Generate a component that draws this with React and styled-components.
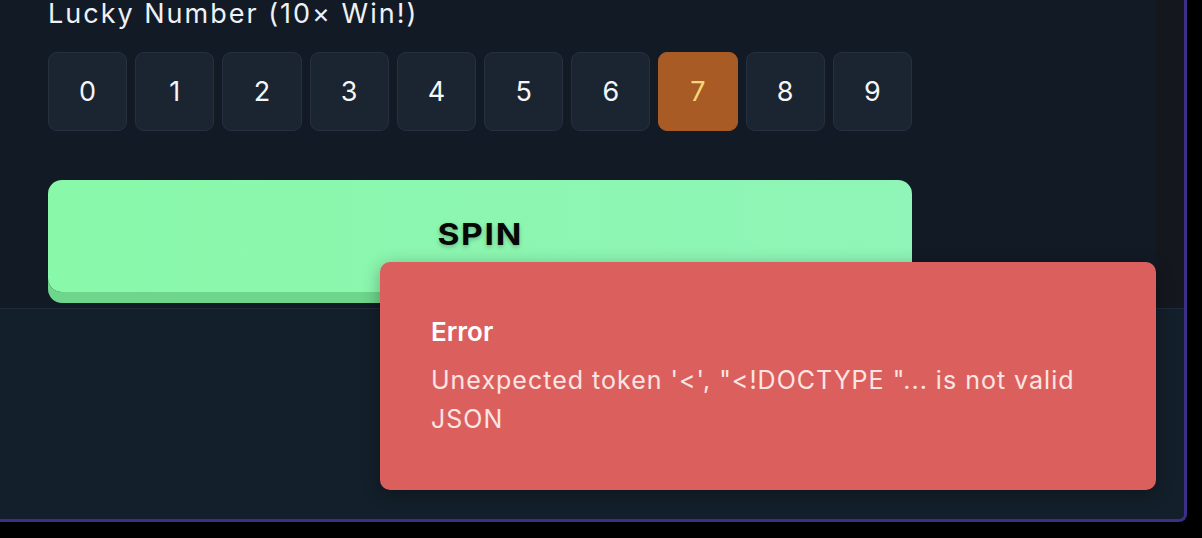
import styled, { createGlobalStyle } from 'styled-components'

const Global = createGlobalStyle`
  html, body {
    margin: 0;
    padding: 0;
    background: #000;
    font-family: Inter, "Noto Sans", sans-serif;
  }
  * { box-sizing: border-box; }
`

const numbers = [0, 1, 2, 3, 4, 5, 6, 7, 8, 9]

function App() {
  const lucky = 7
  return (
    <>
      <Global />
      <Frame>
        <Upper>
          <Content>
            <Label>Lucky Number (10× Win!)</Label>
            <Grid>
              {numbers.map(n => (
                <NumBox key={n} selected={n === lucky}>{n}</NumBox>
              ))}
            </Grid>
            <SpinButton>
              <SpinText>SPIN</SpinText>
            </SpinButton>
          </Content>
          <Track />
        </Upper>
        <Footer />
        <Toast>
          <ToastTitle>Error</ToastTitle>
          <ToastMessage>Unexpected token '&lt;', "&lt;!DOCTYPE "... is not valid JSON</ToastMessage>
        </Toast>
      </Frame>
    </>
  )
}

export default App

const Frame = styled.div`
position: relative;
width: 1187px;
height: 522px;
border-right: 3px solid #3b2f8a;
border-bottom: 3px solid #3b2f8a;
border-bottom-right-radius: 8px;
overflow: hidden;
display: flex;
flex-direction: column;
background: #131f2a;
`

const Upper = styled.div`
height: 309px;
flex-shrink: 0;
display: flex;
background: #121a26;
border-bottom: 1px solid #1d2a39;
`

const Content = styled.div`
flex: 1;
padding-left: 48px;
`

const Track = styled.div`
width: 28px;
background: #15171f;
`

const Label = styled.div`
margin-top: 1px;
font-size: 27px;
line-height: 26px;
letter-spacing: 2px;
color: #eef1f5;
`

const Grid = styled.div`
margin-top: 25px;
width: 864px;
display: grid;
grid-template-columns: repeat(10, 1fr);
gap: 8px;
`

const NumBox = styled.div`
height: 79px;
display: flex;
align-items: center;
justify-content: center;
border-radius: 9px;
font-size: 27px;
background: ${p => p.selected ? '#a95b25' : '#1b2431'};
border: 1px solid ${p => p.selected ? '#a95b25' : '#263041'};
color: ${p => p.selected ? '#f7d67e' : '#f4f6f8'};
`

const SpinButton = styled.div`
margin-top: 49px;
width: 864px;
height: 112px;
border-radius: 14px;
background: linear-gradient(90deg, #89f8a9, #8ff5b8);
box-shadow: 0 11px 0 #6dd58c;
display: flex;
align-items: center;
justify-content: center;
padding-bottom: 4px;
`

const SpinText = styled.span`
display: inline-block;
font-size: 30px;
font-weight: 700;
color: #050805;
letter-spacing: 1.5px;
transform: scaleX(1.12);
text-shadow: 0 2px 4px rgba(0, 0, 0, 0.25);
`

const Footer = styled.div`
flex: 1;
background: #131f2a;
`

const Toast = styled.div`
position: absolute;
right: 28px;
bottom: 29px;
width: 776px;
height: 228px;
padding: 52px 51px 0;
border-radius: 10px;
background: #db605d;
box-shadow: 0 4px 18px rgba(0, 0, 0, 0.3);
`

const ToastTitle = styled.div`
font-size: 26px;
line-height: 36px;
font-weight: 600;
color: #fff;
`

const ToastMessage = styled.div`
margin-top: 11px;
font-size: 25px;
line-height: 39px;
letter-spacing: 1px;
color: #fbe5e3;
`
